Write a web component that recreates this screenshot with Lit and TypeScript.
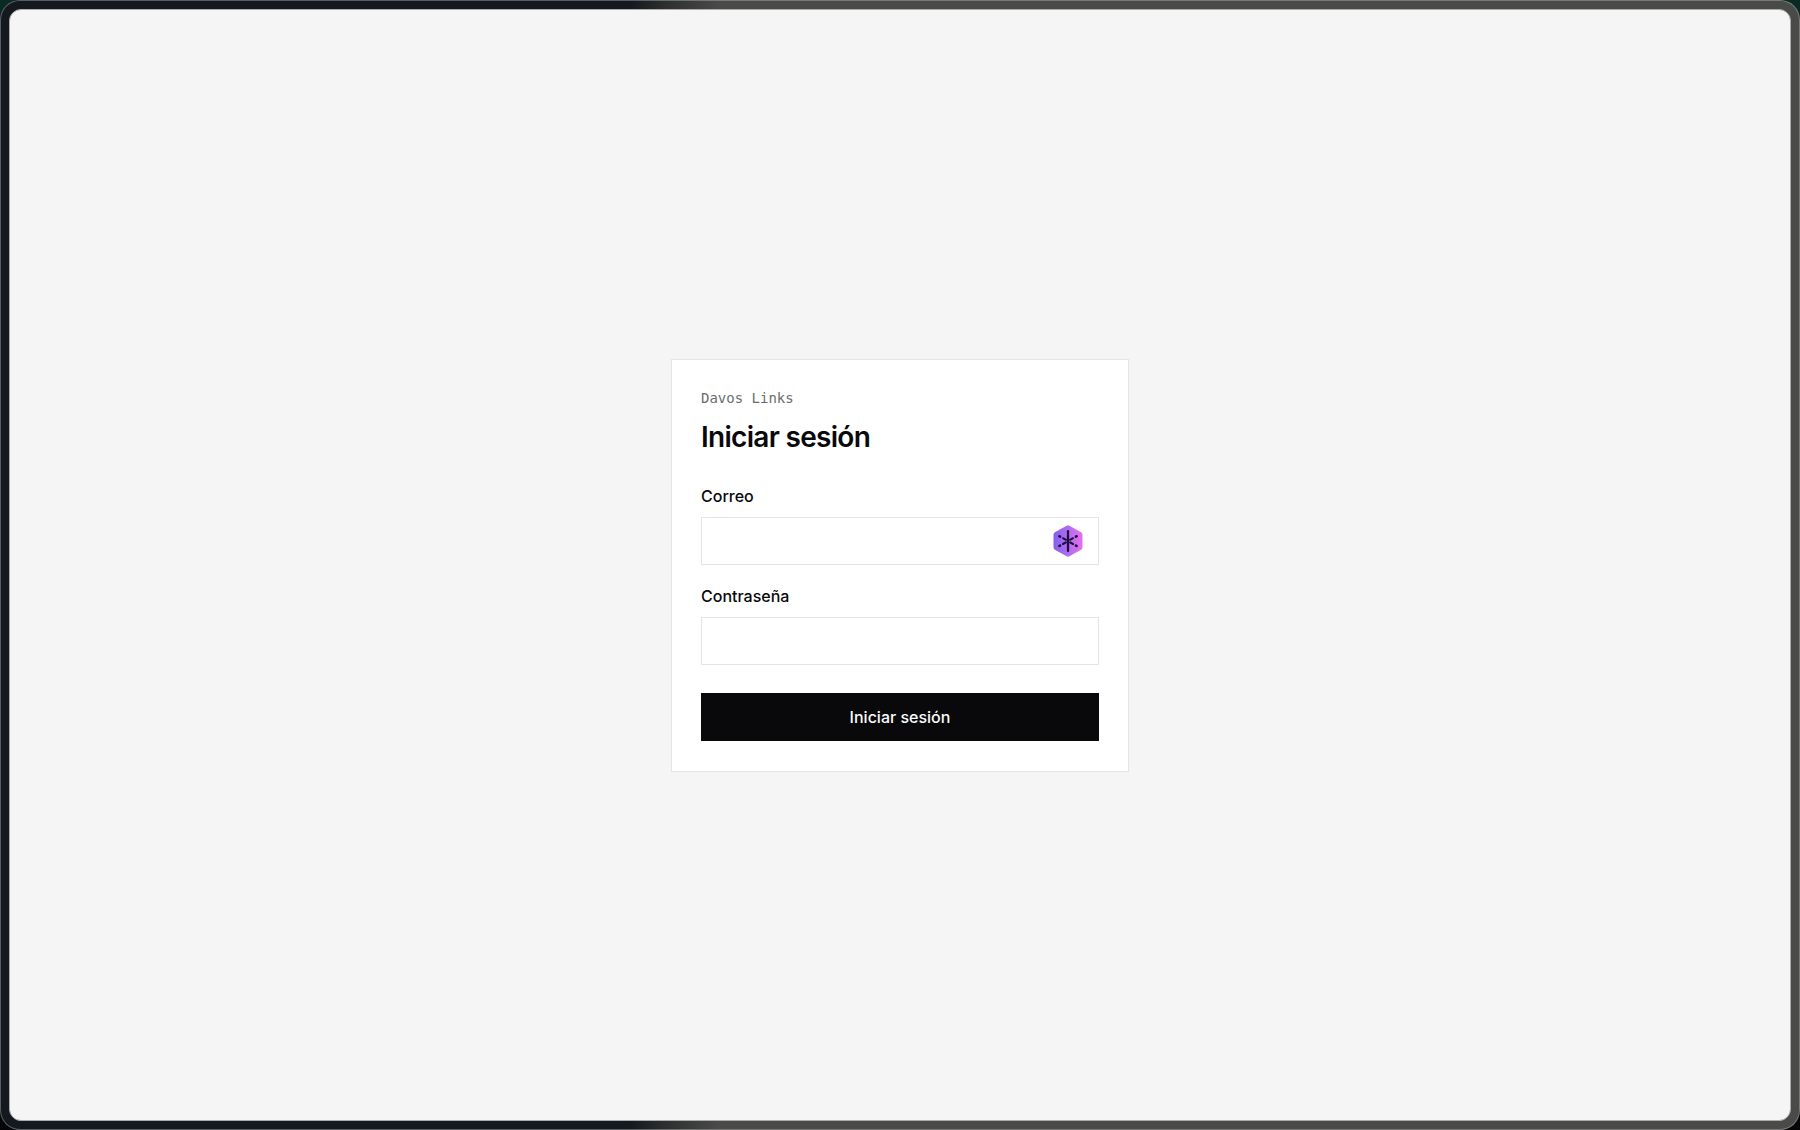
import { LitElement, html, css } from "lit";
import { customElement } from "lit/decorators.js";

const hexagonMark = html`<svg class="mark" viewBox="0 0 30 32" aria-hidden="true">
  <defs>
    <linearGradient id="mark-fill" x1="0" y1="0" x2="1" y2="0">
      <stop offset="0" stop-color="#8360ee" />
      <stop offset="0.5" stop-color="#b06cf0" />
      <stop offset="1" stop-color="#e66fec" />
    </linearGradient>
  </defs>
  <path
    d="M13.6 0.7Q15 -0.1 16.4 0.7L28.1 7.3Q29.5 8.1 29.5 9.7V22.3Q29.5 23.9 28.1 24.7L16.4 31.3Q15 32.1 13.6 31.3L1.9 24.7Q0.5 23.9 0.5 22.3V9.7Q0.5 8.1 1.9 7.3Z"
    fill="url(#mark-fill)"
  />
  <g stroke="#1c0f3d" stroke-linecap="round" fill="none">
    <path d="M15 6.2V26" stroke-width="2.3" />
    <path d="M10 13.2L12.9 14.8M10 19L12.9 17.4M20 13.2L17.1 14.8M20 19L17.1 17.4" stroke-width="2" />
    <path d="M6.3 11.2L7.1 11.6M6.3 21L7.1 20.6M23.7 11.2L22.9 11.6M23.7 21L22.9 20.6" stroke-width="2.5" />
  </g>
</svg>`;

@customElement("app-root")
export class AppRoot extends LitElement {
  static styles = css`
    :host {
      display: block;
      min-height: 100vh;
      background: linear-gradient(#0a2a24, #0a0a10 60%, #050407);
      font-family: Inter, "Liberation Sans", sans-serif;
      color: #09090b;
    }
    *,
    *::before,
    *::after {
      box-sizing: border-box;
    }
    .frame {
      display: flex;
      min-height: 100vh;
      padding: 8px;
      border: 1px solid #bec3c366;
      border-radius: 20px;
      background: linear-gradient(90deg, #13191e 0 35%, #2d302f 37%, #4a4a49 40%, #4a4a49);
      background-origin: border-box;
    }
    .page {
      flex: 1;
      display: grid;
      place-items: center;
      padding: 16px;
      border: 1px solid #a9abab;
      border-radius: 12px;
      background: #f5f5f5;
    }
    .card {
      width: 100%;
      max-width: 458px;
      padding: 28px 29px 30px;
      border: 1px solid #e5e5e7;
      background: #fff;
    }
    .brand {
      margin: 0;
      font: 14px/20px "DejaVu Sans Mono", "Liberation Mono", monospace;
      color: #6c6c70;
    }
    h1 {
      margin: 11px 0 30px;
      font-size: 28px;
      line-height: 36px;
      font-weight: 600;
      letter-spacing: -0.025em;
    }
    .field {
      display: flex;
      flex-direction: column;
      gap: 9px;
      margin-bottom: 20px;
    }
    label {
      font-size: 16px;
      line-height: 23px;
      font-weight: 500;
    }
    .control {
      position: relative;
      display: flex;
    }
    input {
      flex: 1;
      min-width: 0;
      height: 48px;
      padding: 0 14px;
      border: 1px solid #e4e4e7;
      border-radius: 0;
      background: #fff;
      font: inherit;
      color: inherit;
      outline: none;
    }
    .mark {
      position: absolute;
      right: 16px;
      top: 8px;
      width: 30px;
      height: 32px;
    }
    button {
      width: 100%;
      height: 48px;
      margin-top: 8px;
      border: 0;
      background: #09090b;
      color: #fafafa;
      font: 500 16px/24px Inter, "Liberation Sans", sans-serif;
    }
  `;

  render() {
    return html`
      <div class="frame">
        <main class="page">
          <form class="card" @submit=${(e: Event) => e.preventDefault()}>
            <p class="brand">Davos Links</p>
            <h1>Iniciar sesión</h1>
            <div class="field">
              <label for="email">Correo</label>
              <div class="control">
                <input id="email" type="email" autocomplete="email" />
                ${hexagonMark}
              </div>
            </div>
            <div class="field">
              <label for="password">Contraseña</label>
              <div class="control">
                <input id="password" type="password" autocomplete="current-password" />
              </div>
            </div>
            <button type="submit">Iniciar sesión</button>
          </form>
        </main>
      </div>
    `;
  }
}
